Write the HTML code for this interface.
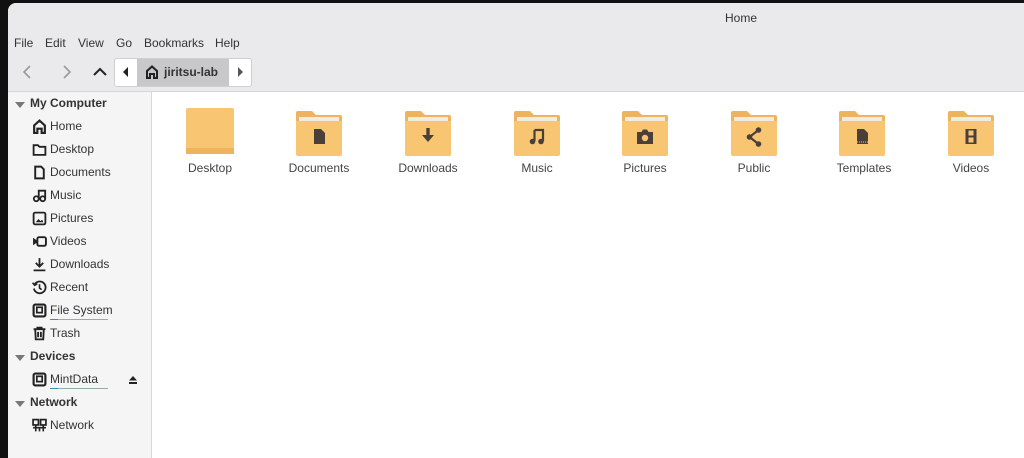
<!DOCTYPE html>
<html><head><meta charset="utf-8"><style>
*{margin:0;padding:0;box-sizing:border-box}
body{width:1024px;height:458px;background:#111;overflow:hidden;font-family:"Liberation Sans","DejaVu Sans",sans-serif;position:relative}
.win{position:absolute;left:8px;top:3px;width:1016px;height:455px;background:#fff;border-top-left-radius:8px;overflow:hidden}
.head{position:absolute;left:0;top:0;width:1016px;height:89px;background:#eaeaec;border-bottom:1px solid #d6d6d8}
.title{position:absolute;left:717px;top:8px;font-size:12px;color:#333}
.menu{position:absolute;top:33px;font-size:12px;color:#333}
.side{position:absolute;left:0;top:89px;width:144px;height:366px;background:#f5f5f6;border-right:1px solid #d8d8da}
.si{position:absolute;left:42px;font-size:12px;color:#333}
.sh{position:absolute;left:22px;font-size:12px;font-weight:bold;color:#333}
.tri{position:absolute;left:7px;width:0;height:0;border-left:5px solid transparent;border-right:5px solid transparent;border-top:6px solid #777}
.ic{position:absolute;left:24px;width:15px;height:15px;margin-top:-1px}
.f{position:absolute;top:105px;width:48px;height:48px}
.fl{position:absolute;top:158px;width:100px;text-align:center;font-size:12px;color:#444}
</style></head><body>
<div class="win">
<div class="head">
<div class="title">Home</div>
<div class="menu" style="left:6px">File</div>
<div class="menu" style="left:37px">Edit</div>
<div class="menu" style="left:70px">View</div>
<div class="menu" style="left:108px">Go</div>
<div class="menu" style="left:136px">Bookmarks</div>
<div class="menu" style="left:207px">Help</div>
<svg style="position:absolute;left:10px;top:61px" width="90" height="16"><path d="M12 2 L6 8 L12 14" stroke="#999" stroke-width="1.6" fill="none"/><path d="M46 2 L52 8 L46 14" stroke="#999" stroke-width="1.6" fill="none"/><path d="M76 11 L82 5 L88 11" stroke="#222" stroke-width="2" fill="none"/></svg>
<div style="position:absolute;left:106px;top:55px;width:138px;height:29px;background:#fff;border:1px solid #d0d0d2;border-radius:3px"></div>
<div style="position:absolute;left:129px;top:56px;width:92px;height:27px;background:#c8c8ca"></div>
<svg style="position:absolute;left:113px;top:63px" width="10" height="12"><path d="M7 1 L2 6 L7 11Z" fill="#222"/></svg>
<svg style="position:absolute;left:227px;top:63px" width="10" height="12"><path d="M3 1 L8 6 L3 11Z" fill="#555"/></svg>
<svg style="position:absolute;left:137px;top:62px" width="14" height="14"><path d="M2 13 V6 L7 1.5 L12 6 V13 H9 V9 H5 V13Z" fill="none" stroke="#222" stroke-width="2"/></svg>
<div style="position:absolute;left:156px;top:62px;font-size:12px;font-weight:bold;color:#333">jiritsu-lab</div>
</div>
<div class="side">
<div class="tri" style="top:10px"></div><div class="sh" style="top:4px">My Computer</div>
<svg class="ic" style="top:28px" viewBox="0 0 14 14"><path d="M2 13V6L7 1.5 12 6V13H9V9H5V13Z" fill="none" stroke="#222" stroke-width="2"/></svg><div class="si" style="top:27px">Home</div>
<svg class="ic" style="top:51px" viewBox="0 0 14 14"><path d="M1.5 3H5.5L7 4.5H12.5V12H1.5Z" fill="none" stroke="#222" stroke-width="1.7"/></svg><div class="si" style="top:50px">Desktop</div>
<svg class="ic" style="top:74px" viewBox="0 0 14 14"><path d="M3 1.5H8.5L11 4V12.5H3Z" fill="none" stroke="#222" stroke-width="1.8"/></svg><div class="si" style="top:73px">Documents</div>
<svg class="ic" style="top:97px" viewBox="0 0 14 14"><circle cx="4" cy="10" r="2.3" fill="none" stroke="#222" stroke-width="1.7"/><circle cx="10" cy="10" r="2.3" fill="none" stroke="#222" stroke-width="1.7"/><path d="M6.3 10V2.5H12.3V10" fill="none" stroke="#222" stroke-width="1.7"/></svg><div class="si" style="top:96px">Music</div>
<svg class="ic" style="top:120px" viewBox="0 0 14 14"><rect x="1.5" y="1.5" width="11" height="11" rx="1.5" fill="none" stroke="#222" stroke-width="1.7"/><path d="M3.5 10.5L6 7.5 8 9.5 9.5 8 10.5 10.5Z" fill="#222"/></svg><div class="si" style="top:119px">Pictures</div>
<svg class="ic" style="top:143px" viewBox="0 0 14 14"><rect x="5" y="3" width="8" height="8" rx="1.5" fill="none" stroke="#222" stroke-width="1.8"/><path d="M1 3.5L4.5 6V8L1 10.5Z" fill="#222"/></svg><div class="si" style="top:142px">Videos</div>
<svg class="ic" style="top:166px" viewBox="0 0 14 14"><path d="M7 1V9M3.5 5.5L7 9 10.5 5.5M1.5 12.5H12.5" fill="none" stroke="#222" stroke-width="1.7"/></svg><div class="si" style="top:165px">Downloads</div>
<svg class="ic" style="top:189px" viewBox="0 0 14 14"><path d="M2.5 4A5.5 5.5 0 1 1 1.8 8" fill="none" stroke="#222" stroke-width="1.7"/><path d="M0.5 2.5L2.5 5 5 3.5" fill="none" stroke="#222" stroke-width="1.4"/><path d="M7 4V7.5L9 9" fill="none" stroke="#222" stroke-width="1.5"/></svg><div class="si" style="top:188px">Recent</div>
<svg class="ic" style="top:212px" viewBox="0 0 14 14"><rect x="1.5" y="1.5" width="11" height="11" rx="1.5" fill="none" stroke="#222" stroke-width="2"/><rect x="4.5" y="4" width="5" height="5" fill="none" stroke="#222" stroke-width="1.6"/></svg><div class="si" style="top:211px">File System</div>
<div style="position:absolute;left:42px;top:227px;width:58px;height:1px;background:#9aa"></div><div style="position:absolute;left:42px;top:227px;width:8px;height:1px;background:#3a8fb7"></div>
<svg class="ic" style="top:235px" viewBox="0 0 14 14"><path d="M1.5 3H12.5M5 3V1.5H9V3M3 3L3.5 12.5H10.5L11 3M5.7 5.5V10.5M8.3 5.5V10.5" fill="none" stroke="#222" stroke-width="1.7"/></svg><div class="si" style="top:234px">Trash</div>
<div class="tri" style="top:263px"></div><div class="sh" style="top:257px">Devices</div>
<svg class="ic" style="top:281px" viewBox="0 0 14 14"><rect x="1.5" y="1.5" width="11" height="11" rx="1.5" fill="none" stroke="#222" stroke-width="2"/><rect x="4.5" y="4" width="5" height="5" fill="none" stroke="#222" stroke-width="1.6"/></svg><div class="si" style="top:280px">MintData</div>
<div style="position:absolute;left:42px;top:296px;width:58px;height:1px;background:#9aa"></div><div style="position:absolute;left:42px;top:296px;width:8px;height:1px;background:#3a8fb7"></div>
<svg style="position:absolute;left:120px;top:283px" width="10" height="10"><path d="M5 1L9 5.5H1Z M1 7H9V9H1Z" fill="#222"/></svg>
<div class="tri" style="top:309px"></div><div class="sh" style="top:303px">Network</div>
<svg class="ic" style="top:327px" viewBox="0 0 14 14"><rect x="1" y="1.5" width="5" height="5" fill="none" stroke="#222" stroke-width="1.6"/><rect x="8" y="1.5" width="5" height="5" fill="none" stroke="#222" stroke-width="1.6"/><path d="M3.5 6.5V9M10.5 6.5V9M1 9H13M3.5 9V12.5M7 9V12.5M10.5 9V12.5" fill="none" stroke="#222" stroke-width="1.5"/></svg><div class="si" style="top:326px">Network</div>
</div>

<svg width="0" height="0" style="position:absolute">
<defs>
<symbol id="fo" viewBox="0 0 48 48"><path d="M1 5Q1 3 3 3H17L21 7H45Q47 7 47 9V44H1Z" fill="#eeb35e"/><rect x="4" y="9" width="40" height="6" fill="#f1ece2"/><path d="M1 13H47V46Q47 48 45 48H3Q1 48 1 46Z" fill="#f8c673"/></symbol>
</defs></svg>

<svg class="f" style="left:178px" viewBox="0 0 48 48"><rect x="0" y="0" width="48" height="46" rx="2" fill="#f8c673"/><rect x="0" y="40" width="48" height="6" fill="#eeb35e"/></svg>
<svg class="f" style="left:287px"><use href="#fo"/><path d="M19 21H26L30 25V36H19Z" fill="#4a4038"/></svg>
<svg class="f" style="left:396px"><use href="#fo"/><path d="M22.3 20H25.7V27H30L24 34 18 27H22.3Z" fill="#4a4038"/></svg>
<svg class="f" style="left:505px"><use href="#fo"/><path d="M21.5 22H30V33M21.5 22V33" fill="none" stroke="#4a4038" stroke-width="2.2"/><circle cx="19.5" cy="33.5" r="2.8" fill="#4a4038"/><circle cx="28" cy="33.5" r="2.8" fill="#4a4038"/></svg>
<svg class="f" style="left:613px"><use href="#fo"/><path d="M16 24H20.5L22 21.5H26L27.5 24H32V36H16Z" fill="#4a4038"/><circle cx="24" cy="30" r="3.2" fill="#f8c673"/></svg>
<svg class="f" style="left:722px"><use href="#fo"/><path d="M28.5 22L19.5 29 28.5 36" fill="none" stroke="#4a4038" stroke-width="2.2"/><circle cx="28.5" cy="22" r="2.8" fill="#4a4038"/><circle cx="19.5" cy="29" r="2.8" fill="#4a4038"/><circle cx="28.5" cy="36" r="2.8" fill="#4a4038"/></svg>
<svg class="f" style="left:830px"><use href="#fo"/><path d="M19 21H26L30 25V36H19Z" fill="#4a4038"/><path d="M19 34H30" stroke="#f8c673" stroke-width="1" stroke-dasharray="1 1"/></svg>
<svg class="f" style="left:939px"><use href="#fo"/><rect x="18.5" y="21" width="11" height="15" fill="#4a4038"/><rect x="21.5" y="22.5" width="5" height="5" fill="#f8c673"/><rect x="21.5" y="29.5" width="5" height="5" fill="#f8c673"/></svg>

<div class="fl" style="left:152px">Desktop</div>
<div class="fl" style="left:261px">Documents</div>
<div class="fl" style="left:370px">Downloads</div>
<div class="fl" style="left:479px">Music</div>
<div class="fl" style="left:587px">Pictures</div>
<div class="fl" style="left:696px">Public</div>
<div class="fl" style="left:806px">Templates</div>
<div class="fl" style="left:913px">Videos</div>
</div>
</body></html>
